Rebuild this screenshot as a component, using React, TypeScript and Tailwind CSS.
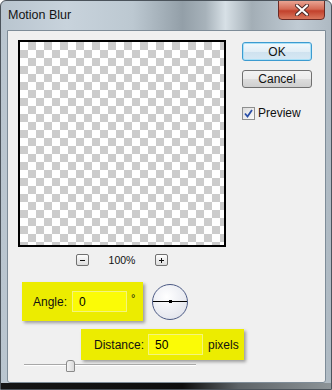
import React from 'react'

const font = "font-['Liberation_Sans',Arial,sans-serif]"

const ZoomButton = ({ plus }: { plus?: boolean }) => (
    <div className="flex h-[12px] w-[13px] items-center justify-center rounded-[2px] border border-[#707070] bg-[linear-gradient(#fdfdfd,#dcdcdc)]">
        <svg width="7" height="7" viewBox="0 0 7 7">
            <line x1="1" y1="3.5" x2="6" y2="3.5" stroke="#111" strokeWidth="1" />
            {plus && <line x1="3.5" y1="1" x2="3.5" y2="6" stroke="#111" strokeWidth="1" />}
        </svg>
    </div>
)

const Field = ({ value }: { value: string }) => (
    <div className="flex h-[21px] w-[55px] items-center border border-[#f4f47c] bg-[#fbfb06] pl-[6px] text-[12px] text-black">
        {value}
    </div>
)

const App = () => {
    return (
        <div
            className={`relative flex h-[390px] w-[332px] flex-col overflow-hidden rounded-t-[6px] border border-[#4b535b] bg-[linear-gradient(90deg,#b9c5cf_0%,#c8d3dc_20%,#bcc8d1_40%,#939fa8_55%,#a7b2ba_62%,#d7e0e6_68%,#a3aeb6_76%,#c0cbd4_90%,#aeb9c2_100%)] ${font}`}
        >
            {/* title bar */}
            <div className="flex h-[29px] shrink-0 items-center pl-[7px] text-[12.5px] text-[#141414]">
                Motion Blur
            </div>
            <div className="absolute right-[6px] top-[-1px] flex h-[20px] w-[47px] items-center justify-center rounded-b-[4px] border border-[#6b2a24] bg-[linear-gradient(#e9a493_0%,#d46a55_45%,#c2412c_55%,#d9775d_100%)]">
                <svg width="14" height="12" viewBox="0 0 14 12">
                    <path d="M2 1.5 L12 10.5 M12 1.5 L2 10.5" stroke="#4a2a28" strokeWidth="4" strokeLinecap="round" />
                    <path d="M2 1.5 L12 10.5 M12 1.5 L2 10.5" stroke="#ffffff" strokeWidth="2.2" strokeLinecap="round" />
                </svg>
            </div>

            {/* dialog body */}
            <div className="ml-[6px] h-[353px] w-[319px] shrink-0 rounded-b-[3px] border border-[#7e8c98] bg-[#f0f0f0] text-[12px] text-[#111]">
                <div className="flex pl-[10px] pt-[9px]">
                    <div className="flex flex-col">
                        <div className="h-[207px] w-[208px] border-2 border-black bg-[conic-gradient(#cccccc_90deg,#ffffff_90deg_180deg,#cccccc_180deg_270deg,#ffffff_270deg)] [background-size:16px_16px]" />
                        <div className="mt-[7px] flex h-[12px] items-center justify-center">
                            <ZoomButton />
                            <span className="mx-[20px] text-[10.5px] leading-none">100%</span>
                            <ZoomButton plus />
                        </div>
                    </div>
                    <div className="ml-[16px] mt-[2px] flex flex-col">
                        <div className="flex h-[19px] w-[70px] items-center justify-center rounded-[3px] border border-[#3c9bd0] bg-[linear-gradient(#f2f9fd,#e2eef6_50%,#cfe2ef_51%,#d6e8f4)] shadow-[inset_0_0_0_1px_#a9e0f7]">
                            OK
                        </div>
                        <div className="mt-[9px] flex h-[18px] w-[70px] items-center justify-center rounded-[3px] border border-[#707070] bg-[linear-gradient(#f2f2f2,#ebebeb_50%,#dddddd_51%,#cfcfcf)]">
                            Cancel
                        </div>
                        <div className="mt-[16px] flex items-center">
                            <div className="flex h-[13px] w-[13px] items-center justify-center border border-[#8e8f8f] bg-[linear-gradient(135deg,#dcdcdc,#fbfbfb)]">
                                <svg width="9" height="9" viewBox="0 0 9 9">
                                    <path d="M1 4.5 L3.5 7.5 L8 1" fill="none" stroke="#2a4fa8" strokeWidth="1.8" />
                                </svg>
                            </div>
                            <span className="ml-[3px]">Preview</span>
                        </div>
                    </div>
                </div>

                {/* angle */}
                <div className="ml-[14px] mt-[16px] flex items-center">
                    <div className="flex h-[39px] w-[121px] items-center bg-[#ecec00] pl-[11px] shadow-[2px_2px_3px_rgba(0,0,0,0.35)]">
                        <span className="w-[39px]">Angle:</span>
                        <Field value="0" />
                        <span className="ml-[4px] -mt-[6px] text-[11px]">°</span>
                    </div>
                    <div className="relative ml-[9px] flex h-[36px] w-[36px] items-center justify-center rounded-full border-[1.5px] border-[#4d5b85] bg-[radial-gradient(circle_at_40%_35%,#ffffff,#e6e8ef_70%,#cfd3de)]">
                        <div className="h-px w-full bg-black" />
                        <div className="absolute h-[3px] w-[3px] bg-black" />
                    </div>
                </div>

                {/* distance */}
                <div className="ml-[73px] mt-[8px] flex h-[31px] w-[163px] items-center bg-[#ecec00] pl-[13px] shadow-[2px_2px_3px_rgba(0,0,0,0.35)]">
                    <span className="w-[54px]">Distance:</span>
                    <Field value="50" />
                    <span className="ml-[5px]">pixels</span>
                </div>

                {/* slider */}
                <div className="relative ml-[16px] h-[13px] w-[172px]">
                    <div className="absolute left-0 right-0 top-[4px] h-[2px] border-t border-[#a8a8a8] bg-white" />
                    <div className="absolute left-[42px] top-0 h-[12px] w-[9px] rounded-t-[3px] rounded-b-[1px] border border-[#8a8a8a] bg-[linear-gradient(90deg,#f4f4f4,#dadada)]" />
                </div>
            </div>

            {/* bottom frame */}
            <div className="flex-1 bg-[linear-gradient(90deg,#151515_0%,#0e0e0e_55%,#5d6367_72%,#8d9498_100%)]" />
        </div>
    )
}

export default App
